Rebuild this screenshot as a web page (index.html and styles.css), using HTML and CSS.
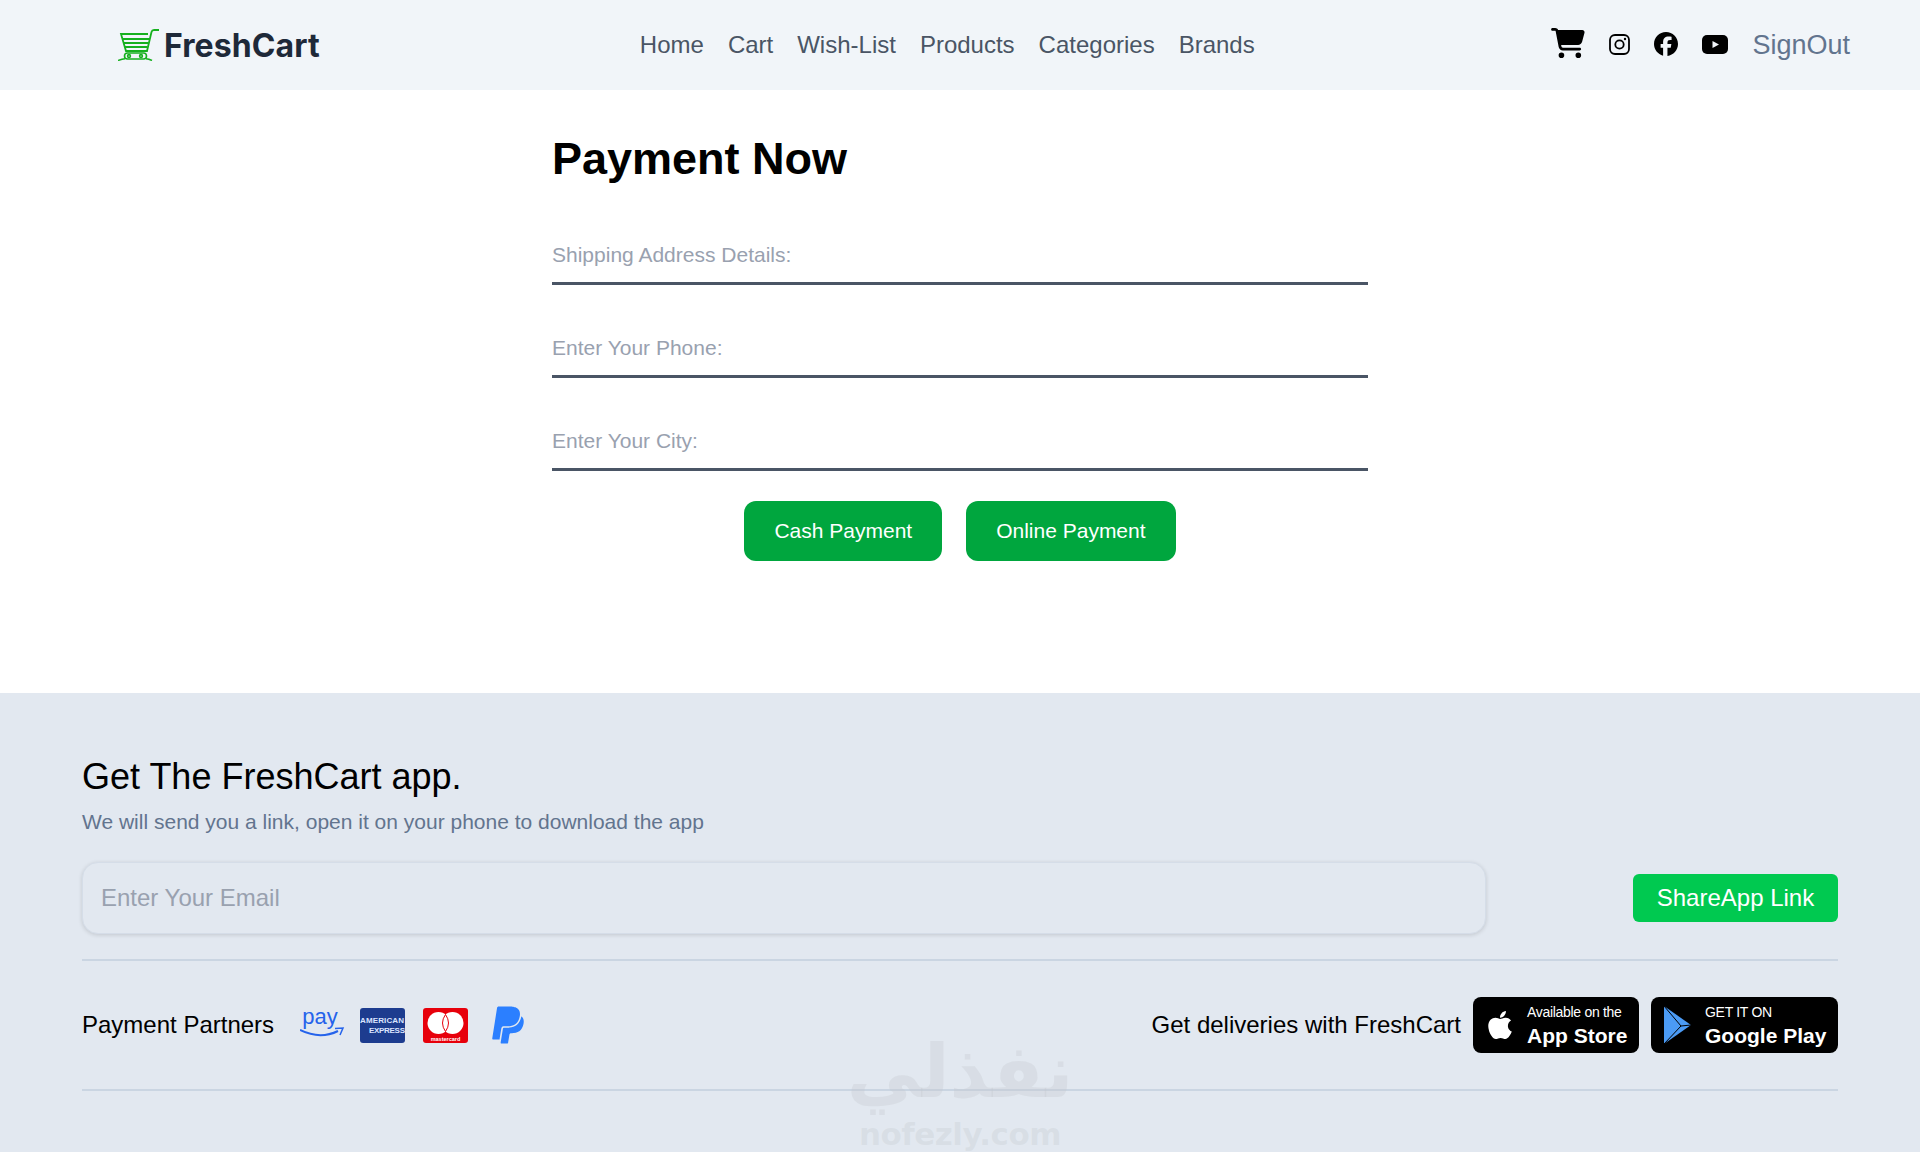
FILE: index.html
```html
<!DOCTYPE html>
<html lang="en">
<head>
<meta charset="utf-8">
<title>FreshCart</title>
<link rel="stylesheet" href="styles.css">
</head>
<body>
<nav class="nav">
  <a class="brand">
    <svg class="brand-icon" viewBox="0 0 41 32" fill="none" stroke="#16b01e" stroke-width="1.6">
      <path d="M30 5H3L8 22H29L33.500 3Q34 1 36 1H41" stroke-width="1.800"/>
      <path d="M4.500 10H31M6 14H30.500M7 18H29.500" stroke-width="1.800"/>
      <rect x="6.500" y="24" width="22" height="6" rx="3"/>
      <circle cx="11" cy="27" r="1.400"/>
      <circle cx="23" cy="27" r="1.400"/>
      <path d="M0 31.500Q4 30 7 29.800M28 29.800Q31 30 34 31.500"/>
    </svg>
    <span class="brand-name">FreshCart</span>
  </a>
  <ul class="nav-links">
    <li>Home</li><li>Cart</li><li>Wish-List</li><li>Products</li><li>Categories</li><li>Brands</li>
  </ul>
  <div class="nav-right">
    <svg class="ic-cart" viewBox="0 0 576 512"><path d="M0 24C0 10.700 10.700 0 24 0H69.500c22 0 41.500 12.800 50.600 32h411c26.300 0 45.500 25 38.600 50.400l-41 152.300c-8.500 31.400-37 53.300-69.500 53.300H170.700l5.400 28.500c2.200 11.300 12.100 19.500 23.600 19.500H488c13.300 0 24 10.700 24 24s-10.700 24-24 24H199.700c-34.600 0-64.300-24.600-70.700-58.500L77.400 54.500c-.7-3.800-4-6.500-7.900-6.500H24C10.700 48 0 37.300 0 24zM128 464a48 48 0 1 1 96 0 48 48 0 1 1 -96 0zm336-48a48 48 0 1 1 0 96 48 48 0 1 1 0-96z"/></svg>
    <svg class="ic-insta" viewBox="0 0 21 21" fill="none" stroke="#000"><rect x="1" y="1" width="19" height="19" rx="5" stroke-width="1.800"/><circle cx="10.500" cy="10.500" r="4.200" stroke-width="1.800"/><circle cx="16" cy="5" r="1.200" fill="#000" stroke="none"/></svg>
    <svg class="ic-fb" viewBox="0 0 512 512"><path d="M512 256C512 114.600 397.400 0 256 0S0 114.600 0 256C0 376 82.700 476.800 194.200 504.500V334.200H141.400V256h52.800V222.300c0-87.100 39.400-127.500 125-127.500c16.200 0 44.200 3.200 55.700 6.400V172c-6-.6-16.500-1-29.600-1c-42 0-58.200 15.900-58.200 57.200V256h83.600l-14.400 78.200H287V510.100C413.800 494.800 512 386.900 512 256h0z"/></svg>
    <svg class="ic-yt" viewBox="0 0 26 19"><rect width="26" height="19" rx="5"/><path d="M10.500 6L17 9.500L10.500 13z" fill="#f1f5f9"/></svg>
    <a class="signout">SignOut</a>
  </div>
</nav>

<main class="main">
  <h1 class="title">Payment Now</h1>
  <form class="pay-form">
    <input class="field" placeholder="Shipping Address Details:">
    <input class="field" placeholder="Enter Your Phone:">
    <input class="field" placeholder="Enter Your City:">
    <div class="pay-actions">
      <button type="button" class="pay-btn">Cash Payment</button>
      <button type="button" class="pay-btn">Online Payment</button>
    </div>
  </form>
</main>

<footer class="footer">
  <h2 class="app-title">Get The FreshCart app.</h2>
  <p class="app-sub">We will send you a link, open it on your phone to download the app</p>
  <div class="share-row">
    <input class="email" placeholder="Enter Your Email">
    <button type="button" class="share-btn">ShareApp Link</button>
  </div>
  <div class="partners-row">
    <div class="partners">
      <span class="row-text">Payment Partners</span>
      <svg class="p-amazon" viewBox="0 -6 45 36">
        <text x="20" y="14" text-anchor="middle" class="amazon-text">pay</text>
        <path d="M0 20Q20 30 38 21" fill="none" stroke="#2563eb" stroke-width="2"/>
        <path d="M35 18.500L43 18L40 25" fill="none" stroke="#2563eb" stroke-width="1.500"/>
      </svg>
      <svg class="p-card" viewBox="0 0 45 35">
        <rect width="45" height="35" rx="3" fill="#1d3c8f"/>
        <text x="0" y="15" class="amex-text" textLength="44">AMERICAN</text>
        <text x="9" y="25" class="amex-text" textLength="36">EXPRESS</text>
      </svg>
      <svg class="p-card" viewBox="0 0 45 35">
        <rect width="45" height="35" rx="3" fill="#e7000b"/>
        <circle cx="15.500" cy="15" r="11" fill="#fff"/>
        <circle cx="29.500" cy="15" r="11" fill="#fff"/>
        <path d="M22.500 6.500Q16.500 15 22.500 23.500Q28.500 15 22.500 6.500z" fill="#fff" stroke="#e7000b" stroke-width="1"/>
        <text x="22.500" y="32.500" text-anchor="middle" class="mc-text">mastercard</text>
      </svg>
      <svg class="p-paypal" viewBox="0 0 384 512"><path fill="#2b7fff" d="M111.400 295.900c-3.500 19.200-17.400 108.700-21.500 134-.3 1.800-1 2.500-3 2.500H12.300c-7.600 0-13.100-6.600-12.100-13.900L58.800 46.600C60.300 37 68.800 29.700 78.700 29.700c152.300 0 165.100-3.700 204 11.400 60.100 23.300 65.600 79.500 44 140.300-21.500 62.600-72.500 89.500-140.100 90.300-43.400 .7-69.500-7-75.200 24.200zM357.100 152c-1.800-1.300-2.500-1.800-3 1.300-2 11.400-5.100 22.500-8.800 33.600-39.900 113.800-150.500 103.900-204.500 103.900-6.100 0-10.100 3.300-10.900 9.400-22.600 140.400-27.100 169.700-27.100 169.700-1 7.100 3.500 12.900 10.600 12.900h63.500c8.600 0 15.700-6.300 17.400-14.900 .7-5.400-1.100 6.100 14.400-91.300 4.600-22 14.300-19.700 29.300-19.700 71 0 126.400-28.800 142.900-112.300 6.500-34.800 4.600-71.400-23.800-92.600z"/></svg>
    </div>
    <div class="stores">
      <span class="row-text">Get deliveries with FreshCart</span>
      <a class="badge badge-apple">
        <svg class="badge-ic apple-ic" viewBox="0 0 384 512"><path fill="#fff" d="M318.700 268.700c-.2-36.700 16.400-64.400 50-84.800-18.800-26.900-47.200-41.700-84.700-44.600-35.500-2.800-74.300 20.700-88.500 20.700-15 0-49.400-19.700-76.400-19.700C63.300 141.200 4 184.800 4 273.500q0 39.300 14.400 81.200c12.800 36.700 59 126.700 107.200 125.200 25.200-.6 43-17.900 75.800-17.900 31.800 0 48.300 17.900 76.400 17.900 48.600-.7 90.400-82.500 102.600-119.300-65.200-30.700-61.700-90-61.700-91.900zm-56.600-164.200c27.300-32.400 24.800-61.900 24-72.500-24.100 1.400-52 16.400-67.900 34.900-17.500 19.800-27.800 44.300-25.600 71.900 26.100 2 49.900-11.400 69.500-34.300z"/></svg>
        <span class="badge-text"><small>Available on the</small><b>App Store</b></span>
      </a>
      <a class="badge badge-play">
        <svg class="badge-ic play-ic" viewBox="0 0 28 40"><path fill="#4b9bf5" d="M0 1L27 20L0 39z"/><path d="M0 1L17 21L0 39M17 21L27 20" fill="none" stroke="#000" stroke-width="1"/></svg>
        <span class="badge-text"><small>GET IT ON</small><b>Google Play</b></span>
      </a>
    </div>
  </div>
  <div class="watermark"><span class="wm-ar">نفذلي</span><span class="wm-en">nofezly.com</span></div>
</footer>
</body>
</html>
```

FILE: styles.css
```css
* { box-sizing: border-box; }
html, body { margin: 0; padding: 0; }
body { font-family: "Liberation Sans", Arial, sans-serif; background: #fff; color: #000; min-height: 1152px; display: flex; flex-direction: column; }

.nav { height: 90px; background: #f1f5f9; display: flex; align-items: center; padding: 0 70px 0 118px; }
.brand { display: flex; align-items: center; gap: 5px; margin-right: 320px; }
.brand-icon { width: 41px; height: 32px; margin-top: -1px; }
.brand-name { font-family: Inter, sans-serif; font-weight: 700; font-size: 32px; letter-spacing: .1px; color: #1e2939; }
.nav-links { display: flex; gap: 24px; list-style: none; margin: 0 auto 0 0; padding: 0; font-size: 24px; color: #4a5565; }
.nav-right { display: flex; align-items: center; gap: 24px; }
.ic-cart { width: 34px; height: 30px; margin-top: -4px; }
.ic-insta { width: 21px; height: 21px; margin-top: -2px; }
.ic-fb { width: 24px; height: 24px; margin-top: -2px; }
.ic-yt { width: 26px; height: 19px; margin-top: -2px; }
.signout { font-size: 27px; color: #62748e; }

.main { height: 603px; display: flex; flex-direction: column; align-items: center; }
.title { width: 816px; margin: 44px 0 0; font-size: 45px; line-height: 50px; font-weight: 700; }
.pay-form { width: 816px; display: flex; flex-direction: column; margin-top: 44px; }
.field { width: 100%; height: 57px; margin-top: 36px; border: 0; border-bottom: 3px solid #4a5565; outline: 0; padding: 0; font: 21px "Liberation Sans", Arial, sans-serif; background: transparent; }
.field:first-child { margin-top: 0; }
.field::placeholder { color: #99a1af; opacity: 1; }
.pay-actions { display: flex; justify-content: center; gap: 24px; margin-top: 30px; }
.pay-btn { height: 60px; padding: 0 30px; border: 0; border-radius: 12px; background: #00a63e; color: #fff; font: 21px "Liberation Sans", Arial, sans-serif; }

.footer { position: relative; flex: 1; background: #e2e8f0; padding: 64px 82px 0; overflow: hidden; }
.app-title { margin: 0; font-size: 36px; line-height: 40px; font-weight: 400; }
.app-sub { margin: 11px 0 0; font-size: 21px; line-height: 28px; color: #62748e; }
.share-row { display: flex; align-items: center; justify-content: space-between; margin-top: 26px; padding-bottom: 25px; border-bottom: 2px solid #cad5e2; }
.email { width: 1404px; height: 72px; padding: 0 18px; border: 1px solid #d5dde8; border-radius: 16px; outline: 0; background: #e2e8f0; box-shadow: 0 1px 4px rgba(0, 0, 0, .14); font: 24px "Liberation Sans", Arial, sans-serif; }
.email::placeholder { color: #99a1af; opacity: 1; }
.share-btn { width: 205px; height: 48px; border: 0; border-radius: 6px; background: #00c950; color: #fff; font: 24px "Liberation Sans", Arial, sans-serif; }

.partners-row { height: 130px; display: flex; align-items: center; justify-content: space-between; border-bottom: 2px solid #cad5e2; }
.partners, .stores { display: flex; align-items: center; }
.row-text { font-size: 24px; }
.p-amazon { width: 45px; height: 36px; margin: -7px 15px 0 26px; }
.amazon-text { font: 22px "Liberation Sans", Arial, sans-serif; fill: #2563eb; }
.p-card { width: 45px; height: 35px; margin-right: 18px; }
.amex-text { font: 700 8px "Liberation Sans", Arial, sans-serif; fill: #dbe4ff; }
.mc-text { font: 700 5.500px "Liberation Sans", Arial, sans-serif; fill: #fff; }
.p-paypal { width: 34px; height: 42px; margin-left: 5px; }
.stores { gap: 12px; }
.badge { height: 56px; border-radius: 8px; background: #000; color: #fff; display: flex; align-items: center; }
.badge-apple { width: 166px; padding-left: 15px; gap: 15px; }
.badge-play { width: 187px; padding-left: 13px; gap: 13px; }
.apple-ic { width: 24px; height: 32px; }
.play-ic { width: 28px; height: 40px; }
.badge-text { display: flex; flex-direction: column; gap: 3px; margin-top: 2px; white-space: nowrap; }
.badge-text small { font-size: 14px; line-height: 17px; letter-spacing: -.3px; }
.badge-text b { font-size: 21px; line-height: 24px; }

.watermark { position: absolute; left: 855px; top: 345px; width: 210px; display: flex; flex-direction: column; align-items: center; gap: 12px; color: rgba(195, 200, 205, .32); pointer-events: none; }
.wm-ar { font: 700 74px/66px "DejaVu Sans", sans-serif; }
.wm-en { font: 700 31px/36px "DejaVu Sans", sans-serif; letter-spacing: -.5px; }
```
